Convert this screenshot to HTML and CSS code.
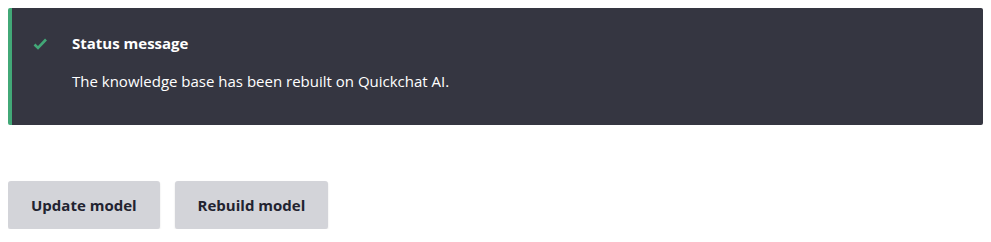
FILE: index.html
```html
<!DOCTYPE html>
<html lang="en">
  <head>
    <meta charset="UTF-8" />
    <title>Quickchat AI</title>
    <link rel="stylesheet" href="styles.css">
  </head>
  <body>
    <!-- status message -->
    <div class="messages messages--status" role="status">
      <div class="messages__icon">
        <svg width="16" height="16" viewBox="0 0 16 16">
          <path d="M1.5 8.5l3.5 3.5 8-8.5" fill="none" stroke="#42a877" stroke-width="2.6" />
        </svg>
      </div>
      <div class="messages__content">
        <h2 class="messages__title">Status message</h2>
        <p class="messages__text">The knowledge base has been rebuilt on Quickchat AI.</p>
      </div>
    </div>

    <!-- actions -->
    <div class="form-actions">
      <button class="button">Update model</button>
      <button class="button">Rebuild model</button>
    </div>
  </body>
</html>
```

FILE: styles.css
```css
/*global*/
* {
  margin: 0;
  padding: 0;
  box-sizing: border-box;
}

body {
  margin: 8px;
  font-family: "Open Sans", "Noto Sans", sans-serif;
  color: #222330;
  background: #fff;
}

/*messages*/
.messages {
  display: flex;
  min-height: 117px;
  padding: 25px 24px 28px 21px;
  background-color: #353641;
  border-left: 4px solid #42a877;
  border-radius: 2px;
  color: #fff;
}

.messages__icon {
  width: 39px;
  padding-top: 2px;
}

.messages__title {
  font-size: 15px;
  font-weight: 700;
  line-height: 20px;
  margin-bottom: 18px;
}

.messages__text {
  font-size: 15px;
  line-height: 20px;
}

/*buttons*/
.form-actions {
  display: flex;
  gap: 15px;
  margin-top: 56px;
}

.button {
  height: 48px;
  padding: 0 23px;
  border: 0;
  border-radius: 3px;
  background-color: #d3d4d9;
  box-shadow: 0 1px 2px rgba(0, 0, 0, 0.12);
  font-family: inherit;
  font-size: 15px;
  font-weight: 700;
  color: #222330;
  cursor: pointer;
}
```
